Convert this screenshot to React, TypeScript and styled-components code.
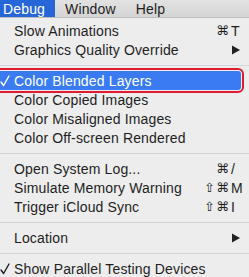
import React from 'react';
import styled, { createGlobalStyle } from 'styled-components';

const GlobalStyle = createGlobalStyle`
  html, body {
    margin: 0;
    padding: 0;
    background: #ededed;
    overflow: hidden;
  }
  body {
    font-family: 'Liberation Sans', 'DejaVu Sans', Arial, sans-serif;
    font-size: 14px;
    letter-spacing: 0.15px;
    color: #1e1e1e;
  }
`;

const MenuBar = styled.div`
  display: flex;
  height: 17px;
  background: linear-gradient(#e2e2e2, #d4d4d4);
  border-bottom: 1px solid #bcbcbc;
`;

const BarItem = styled.div<{ $active?: boolean; $first?: boolean }>`
  display: flex;
  align-items: center;
  padding: 0 10px;
  margin-left: ${(p) => (p.$first ? '-7px' : '0')};
  background: ${(p) => (p.$active ? '#2766d8' : 'transparent')};
  color: ${(p) => (p.$active ? '#ffffff' : '#1e1e1e')};
`;

const Menu = styled.div`
  padding-top: 3px;
  display: flex;
  flex-direction: column;
`;

const Row = styled.div<{ $selected?: boolean }>`
  display: flex;
  align-items: center;
  height: 19px;
  padding-right: 6px;
  ${(p) =>
    p.$selected &&
    `
    background: #3a7bf3;
    color: #ffffff;
    margin: 0 8px 0 -4px;
    padding-left: 4px;
    border-radius: 3px;
    outline: 2px solid #df1b31;
    outline-offset: 1px;
  `}
`;

const Gutter = styled.div`
  width: 14px;
  flex: none;
  display: flex;
  align-items: center;
`;

const Label = styled.div`
  flex: 1;
  white-space: nowrap;
`;

const Separator = styled.div`
  height: 1px;
  margin: 6px 0 5px;
  background: #d6d6d6;
`;

const Shortcut = styled.div`
  display: flex;
  align-items: center;
  font-family: 'DejaVu Sans', 'Liberation Sans', sans-serif;
  font-size: 13px;
`;

const Mods = styled.span`
  letter-spacing: 1px;
`;

const Key = styled.span`
  width: 12px;
  margin-left: 1px;
  text-align: left;
  font-family: 'Liberation Sans', sans-serif;
  font-size: 14px;
`;

const Arrow = styled.svg`
  width: 12px;
  flex: none;
`;

const Check = ({ color }: { color: string }) => (
  <svg width="10" height="12" viewBox="0 0 10 12">
    <path d="M1 7 L3.6 10.5 L9 1" fill="none" stroke={color} strokeWidth="1.4" strokeLinecap="round" strokeLinejoin="round" />
  </svg>
);

type Item =
  | { sep: true }
  | { sep?: false; label: string; mods?: string; keyChar?: string; submenu?: boolean; checked?: boolean; selected?: boolean };

const items: Item[] = [
  { label: 'Slow Animations', mods: '⌘', keyChar: 'T' },
  { label: 'Graphics Quality Override', submenu: true },
  { sep: true },
  { label: 'Color Blended Layers', checked: true, selected: true },
  { label: 'Color Copied Images' },
  { label: 'Color Misaligned Images' },
  { label: 'Color Off-screen Rendered' },
  { sep: true },
  { label: 'Open System Log...', mods: '⌘', keyChar: '/' },
  { label: 'Simulate Memory Warning', mods: '⇧⌘', keyChar: 'M' },
  { label: 'Trigger iCloud Sync', mods: '⇧⌘', keyChar: 'I' },
  { sep: true },
  { label: 'Location', submenu: true },
  { sep: true },
  { label: 'Show Parallel Testing Devices', checked: true },
];

export default function App() {
  return (
    <>
      <GlobalStyle />
      <MenuBar>
        <BarItem $active $first>Debug</BarItem>
        <BarItem>Window</BarItem>
        <BarItem>Help</BarItem>
      </MenuBar>
      <Menu>
        {items.map((it, i) =>
          it.sep ? (
            <Separator key={i} />
          ) : (
            <Row key={i} $selected={it.selected}>
              <Gutter>{it.checked && <Check color={it.selected ? '#ffffff' : '#1e1e1e'} />}</Gutter>
              <Label>{it.label}</Label>
              {it.keyChar && (
                <Shortcut>
                  <Mods>{it.mods}</Mods>
                  <Key>{it.keyChar}</Key>
                </Shortcut>
              )}
              {it.submenu && (
                <Arrow height="10" viewBox="0 0 12 10">
                  <polygon points="1,0.5 9,5 1,9.5" fill="#222" />
                </Arrow>
              )}
            </Row>
          )
        )}
      </Menu>
    </>
  );
}
